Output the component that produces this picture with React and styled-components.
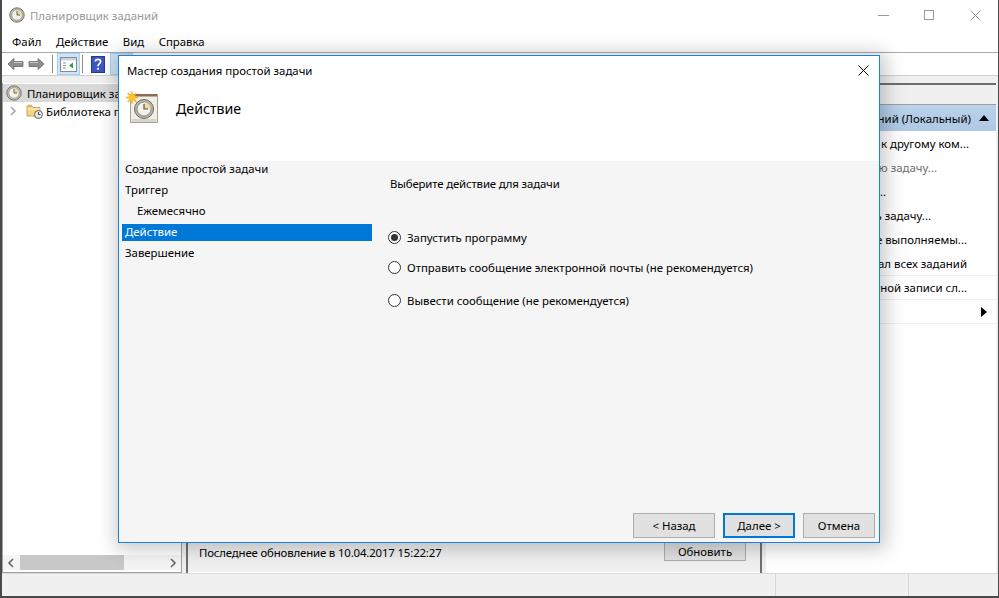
import React from "react";
import styled, { createGlobalStyle } from "styled-components";

const GlobalStyle = createGlobalStyle`
  html, body {
    margin: 0;
    padding: 0;
    overflow: hidden;
    background: #fff;
  }
  * {
    box-sizing: border-box;
  }
  svg {
    flex: none;
  }
`;

const Page = styled.div`
  position: relative;
  width: 999px;
  height: 598px;
  display: flex;
  flex-direction: column;
  overflow: hidden;
  background: #fff;
  border: 1px solid #4a4a4a;
  border-width: 0 1px 2px 2px;
  font-family: "Noto Sans", "Open Sans", sans-serif;
  font-size: 11.4px;
  color: #000;
`;

const TitleBar = styled.div`
  height: 30px;
  flex: none;
  display: flex;
  align-items: center;
  padding-left: 7px;
  gap: 5px;
  color: #999;
`;

const WindowButtons = styled.div`
  margin-left: auto;
  display: flex;
`;

const WindowButton = styled.div`
  width: 46px;
  height: 30px;
  display: flex;
  align-items: center;
  justify-content: center;
  color: #999;
`;

const MenuBar = styled.div`
  height: 23px;
  flex: none;
  display: flex;
  align-items: center;
  padding-left: 10px;
  gap: 14.5px;
  border-bottom: 1px solid #a9a9b4;
`;

const Toolbar = styled.div`
  height: 23px;
  flex: none;
  display: flex;
  align-items: center;
  padding-left: 3px;
  border-bottom: 1px solid #d0d0d0;
`;

const ToolIcon = styled.div`
  width: ${(p) => p.$w || 23}px;
  height: 22px;
  display: flex;
  align-items: center;
  justify-content: center;
  background: ${(p) => (p.$active ? "#cce4f7" : "transparent")};
  border: 1px solid ${(p) => (p.$active ? "#a6d2f2" : "transparent")};
`;

const ToolSep = styled.div`
  width: 1px;
  height: 18px;
  margin: 0 ${(p) => p.$space || 4}px;
  background: #8c8c8c;
`;

const Panes = styled.div`
  flex: 1;
  min-height: 0;
  display: grid;
  grid-template-columns: 180px 1fr 230px;
  gap: 4px;
  padding: 7px 2px 0 0;
  background: #f0f0f0;
`;

const TreePane = styled.div`
  display: flex;
  flex-direction: column;
  background: #fff;
  border: 1px solid #a0a0a0;
  border-width: 0 1px 1px 1px;
  padding-top: 1px;
`;

const TreeRow = styled.div`
  height: 18px;
  flex: none;
  display: flex;
  align-items: center;
  gap: ${(p) => (p.$nested ? 3 : 5)}px;
  padding-left: ${(p) => (p.$nested ? 6 : 3)}px;
  background: ${(p) => (p.$selected ? "#d9d9d9" : "transparent")};
  white-space: nowrap;
  overflow: hidden;
`;

const TreeToggle = styled.span`
  display: flex;
  margin-right: 6px;
`;

const ScrollBar = styled.div`
  margin-top: auto;
  height: 15px;
  margin-bottom: 2px;
  display: flex;
  align-items: center;
  justify-content: space-between;
  padding: 0 4px;
  background: #f4f4f4;
`;

const ScrollThumb = styled.div`
  width: 104px;
  height: 15px;
  margin: 0 auto 0 5px;
  background: #c8c8c8;
`;

const CenterPane = styled.div`
  display: flex;
  flex-direction: column;
  background: #fff;
  border-left: 2px solid #707070;
  border-right: 2px solid #707070;
`;

const UpdateBar = styled.div`
  margin-top: auto;
  height: 31px;
  display: flex;
  align-items: flex-start;
  justify-content: space-between;
  padding: 2px 14px 0 11px;
  background: #f0f0f0;
  margin-bottom: 1px;
`;

const UpdateText = styled.span`
  padding-top: 2px;
  letter-spacing: -0.15px;
`;

const PlainButton = styled.div`
  width: 82px;
  height: 20px;
  display: flex;
  align-items: center;
  justify-content: center;
  background: #e1e1e1;
  border: 1px solid #adadad;
  margin-top: -2px;
`;

const ActionsPane = styled.div`
  display: flex;
  flex-direction: column;
  background: #fff;
  border-top: 2px solid #6e6e6e;
`;

const ActionsTitle = styled.div`
  height: 20px;
  flex: none;
  background: #f0f0f0;
  border-bottom: 1px solid #a0a0a0;
`;

const ActionsHeader = styled.div`
  height: 26px;
  flex: none;
  display: flex;
  align-items: center;
  justify-content: space-between;
  padding: 0 7px 0 19px;
  margin-bottom: 1px;
  background: linear-gradient(#bad2ea, #aec9e5);
  white-space: nowrap;
`;

const ActionRow = styled.div`
  height: 24px;
  flex: none;
  display: flex;
  align-items: center;
  justify-content: space-between;
  padding: 0 9px 0 19px;
  color: ${(p) => (p.$muted ? "#6d6d6d" : "#000")};
  border-bottom: 1px solid ${(p) => (p.$line ? "#f0f0f0" : "transparent")};
  white-space: nowrap;
`;

/* right edge of the label is what shows beside the dialog */
const ActionLabel = styled.span`
  width: ${(p) => p.$width}px;
  display: flex;
  justify-content: flex-end;
`;

const StatusBar = styled.div`
  height: 23px;
  flex: none;
  display: grid;
  grid-template-columns: 774px 133px 1fr;
  background: #f0f0f0;
  border-top: 1px solid #d8d8d8;
`;

const StatusCell = styled.div`
  border-right: 1px solid #d8d8d8;
  &:last-child {
    border-right: 0;
  }
`;

const Dialog = styled.div`
  position: absolute;
  left: 116px;
  top: 55px;
  width: 762px;
  height: 488px;
  display: flex;
  flex-direction: column;
  background: #f5f5f5;
  border: 1px solid #1883d7;
  box-shadow: 2px 2px 18px 4px rgba(0, 0, 0, 0.22);
`;

const DialogHead = styled.div`
  height: 105px;
  flex: none;
  display: flex;
  flex-direction: column;
  background: #fff;
`;

const DialogTitle = styled.div`
  height: 28px;
  flex: none;
  display: flex;
  align-items: center;
  justify-content: space-between;
  padding: 0 10px 0 8px;
`;

const DialogBanner = styled.div`
  display: flex;
  align-items: center;
  gap: 17px;
  padding-left: 6px;
  margin-top: 7px;
  font-size: 14.2px;
`;

const DialogBody = styled.div`
  flex: 1;
  min-height: 0;
  display: grid;
  grid-template-columns: 253px 1fr;
`;

const Steps = styled.div`
  display: flex;
  flex-direction: column;
  padding-left: 3px;
  margin-top: -2px;
`;

const Step = styled.div`
  height: 21px;
  display: flex;
  align-items: center;
  padding: 0 0 2px ${(p) => (p.$indent ? 15 : 3)}px;
  color: ${(p) => (p.$current ? "#fff" : "#000")};
  position: relative;
  z-index: 0;

  /* selection band is shorter than the row */
  &::before {
    content: "";
    position: absolute;
    z-index: -1;
    left: 0;
    right: 0;
    top: 2px;
    bottom: 2px;
    background: ${(p) => (p.$current ? "#0078d7" : "transparent")};
  }
`;

const Choices = styled.div`
  display: flex;
  flex-direction: column;
  padding-left: 16px;
`;

const Prompt = styled.div`
  height: 18px;
  display: flex;
  align-items: center;
  padding-left: 2px;
  margin: 13px 0 36px;
  letter-spacing: -0.15px;
`;

const Choice = styled.label`
  height: 18px;
  display: flex;
  align-items: center;
  gap: 6px;
  margin-bottom: ${(p) => p.$gap}px;
`;

const RadioDot = styled.span`
  width: 13px;
  height: 13px;
  flex: none;
  display: flex;
  align-items: center;
  justify-content: center;
  border-radius: 50%;
  background: #fff;
  border: 1px solid #333;

  &::after {
    content: "";
    width: 7px;
    height: 7px;
    border-radius: 50%;
    background: ${(p) => (p.$on ? "#333" : "transparent")};
  }
`;

const DialogFooter = styled.div`
  height: 25px;
  margin-bottom: 4px;
  flex: none;
  display: flex;
  justify-content: flex-end;
  gap: 8px;
  padding-right: 4px;
`;

const DialogButton = styled.div`
  width: ${(p) => p.$w}px;
  height: 25px;
  display: flex;
  align-items: center;
  justify-content: center;
  background: #e1e1e1;
  border: ${(p) => (p.$primary ? "2px solid #0078d7" : "1px solid #adadad")};
`;

function ClockIcon({ size = 16 }) {
  return (
    <svg width={size} height={size} viewBox="0 0 16 16">
      <circle cx="8" cy="8" r="7.2" fill="#b9b9b2" stroke="#77756e" strokeWidth="1" />
      <circle cx="8" cy="8" r="5.2" fill="#f4f1e6" stroke="#8d8d88" strokeWidth="0.6" />
      <path d="M8 3 A5 5 0 0 1 13 8 L8 8 Z" fill="#ecd9a5" />
      <path d="M8 4v4h3" fill="none" stroke="#5c5c5c" strokeWidth="1" />
    </svg>
  );
}

function FolderIcon() {
  return (
    <svg width="17" height="16" viewBox="0 0 17 16">
      <path d="M1 3h5l1 1.5h7V13H1z" fill="#f2d680" stroke="#b8954a" strokeWidth="0.8" />
      <path d="M1.5 6h12" stroke="#fff1c0" />
      <path d="M3 1.5v1.6M5 1.5v1.6" stroke="#b8954a" />
      <circle cx="12.5" cy="11.5" r="4" fill="#e9e9e4" stroke="#5f5f5f" />
      <path d="M12.5 9v2.6h2" fill="none" stroke="#444" />
    </svg>
  );
}

function TaskIcon() {
  return (
    <svg width="34" height="34" viewBox="0 0 34 34">
      <rect x="5.5" y="3.5" width="27" height="28" fill="#f3efe4" stroke="#a8a294" />
      <rect x="6" y="3" width="26" height="2.5" fill="#8c6a55" />
      <rect x="7" y="28" width="24" height="3" fill="#d8d4ca" />
      <circle cx="19" cy="18" r="9.5" fill="#b4b4ae" stroke="#6f6f68" />
      <circle cx="19" cy="18" r="7" fill="#f4f1e6" stroke="#8d8d88" />
      <path d="M19 11 A7 7 0 0 1 26 18 L19 18 Z" fill="#ecd9a5" />
      <path d="M19 13v5h4" fill="none" stroke="#555" strokeWidth="1.2" />
      <g stroke="#f5a81c" strokeWidth="1.4">
        <path d="M7 0.5v12M1 6.5h12M2.7 2.2l8.6 8.6M11.3 2.2l-8.6 8.6" />
      </g>
      <circle cx="7" cy="6.5" r="3.6" fill="#fbc22d" />
    </svg>
  );
}

function NavArrow({ flip }) {
  return (
    <svg width="17" height="14" viewBox="0 0 17 14" style={flip ? { transform: "scaleX(-1)" } : undefined}>
      <path d="M1 7 7 1.5V4.5H16V9.5H7V12.5Z" fill="#8f8f8f" stroke="#6a6a6a" strokeWidth="0.8" />
      <path d="M7 5.5H15" stroke="#c8c8c8" />
    </svg>
  );
}

function PanelIcon() {
  return (
    <svg width="17" height="15" viewBox="0 0 17 15">
      <rect x="0.5" y="0.5" width="16" height="14" fill="#fff" stroke="#8a8a8a" />
      <rect x="1" y="1" width="15" height="2.5" fill="#c9d3dc" />
      <path d="M3 6h3M3 8.5h3M3 11h3" stroke="#7f97ab" />
      <path d="M13 5.5v6l-4-3z" fill="#2f9e44" />
    </svg>
  );
}

function HelpIcon() {
  return (
    <svg width="14" height="17" viewBox="0 0 14 17">
      <rect x="0.5" y="0.5" width="13" height="16" fill="#3a56c5" stroke="#26398c" />
      <path d="M4.4 5.6C4.4 2.6 9.6 2.6 9.6 5.6C9.6 7.8 7 7.6 7 10.3M7 11.8v2" fill="none" stroke="#fff" strokeWidth="1.8" />
    </svg>
  );
}

function CrossIcon({ size = 11, color = "#000" }) {
  return (
    <svg width={size} height={size} viewBox="0 0 11 11">
      <path d="M0.5 0.5 10.5 10.5M10.5 0.5 0.5 10.5" stroke={color} strokeWidth="1" />
    </svg>
  );
}

function Chevron({ flip, color = "#666" }) {
  return (
    <svg width="8" height="10" viewBox="0 0 8 10" style={flip ? { transform: "scaleX(-1)" } : undefined}>
      <path d="M2 1 6 5 2 9" fill="none" stroke={color} strokeWidth="1.6" />
    </svg>
  );
}

const actions = [
  { label: "Подключиться к другому ком...", width: 184 },
  { label: "Создать простую задачу...", width: 152, muted: true },
  { label: "Создать задачу...", width: 101 },
  { label: "Импортировать задачу...", width: 146 },
  { label: "Отображать все выполняемы...", width: 182 },
  { label: "Включить журнал всех заданий", width: 182, line: true },
  { label: "Настройка учетной записи сл...", width: 182, line: true },
  {
    label: "Вид",
    width: 20,
    line: true,
    extra: (
      <svg width="6" height="10" viewBox="0 0 6 10">
        <path d="M0 0 6 5 0 10Z" fill="#000" />
      </svg>
    ),
  },
];

export default function App() {
  return (
    <>
      <GlobalStyle />
      <Page>
        <TitleBar>
          <ClockIcon />
          <span>Планировщик заданий</span>
          <WindowButtons>
            <WindowButton>
              <svg width="11" height="1" viewBox="0 0 11 1">
                <path d="M0 .5h11" stroke="#999" />
              </svg>
            </WindowButton>
            <WindowButton>
              <svg width="10" height="10" viewBox="0 0 10 10">
                <rect x=".5" y=".5" width="9" height="9" fill="none" stroke="#999" />
              </svg>
            </WindowButton>
            <WindowButton>
              <CrossIcon color="#999" />
            </WindowButton>
          </WindowButtons>
        </TitleBar>
        <MenuBar>
          <span>Файл</span>
          <span>Действие</span>
          <span>Вид</span>
          <span>Справка</span>
        </MenuBar>
        <Toolbar>
          <ToolIcon $w={20}>
            <NavArrow />
          </ToolIcon>
          <ToolIcon $w={23}>
            <NavArrow flip />
          </ToolIcon>
          <ToolSep $space={4} />
          <ToolIcon $active>
            <PanelIcon />
          </ToolIcon>
          <ToolSep $space={2} />
          <ToolIcon $w={25}>
            <HelpIcon />
          </ToolIcon>
          <ToolIcon $active />
        </Toolbar>
        <Panes>
          <TreePane>
            <TreeRow $selected>
              <ClockIcon />
              <span>Планировщик заданий (Локальный)</span>
            </TreeRow>
            <TreeRow $nested>
              <TreeToggle>
                <Chevron color="#a6a6a6" />
              </TreeToggle>
              <FolderIcon />
              <span>Библиотека планировщика заданий</span>
            </TreeRow>
            <ScrollBar>
              <Chevron flip />
              <ScrollThumb />
              <Chevron />
            </ScrollBar>
          </TreePane>
          <CenterPane>
            <UpdateBar>
              <UpdateText>Последнее обновление в 10.04.2017 15:22:27</UpdateText>
              <PlainButton>Обновить</PlainButton>
            </UpdateBar>
          </CenterPane>
          <ActionsPane>
            <ActionsTitle />
            <ActionsHeader>
              <ActionLabel $width={186}>Планировщик заданий (Локальный)</ActionLabel>
              <svg width="10" height="6" viewBox="0 0 10 6">
                <path d="M0 6 5 0 10 6Z" fill="#000" />
              </svg>
            </ActionsHeader>
            {actions.map((a) => (
              <ActionRow key={a.label} $muted={a.muted} $line={a.line}>
                <ActionLabel $width={a.width}>{a.label}</ActionLabel>
                {a.extra}
              </ActionRow>
            ))}
          </ActionsPane>
        </Panes>
        <StatusBar>
          <StatusCell />
          <StatusCell />
          <StatusCell />
        </StatusBar>
        <Dialog>
          <DialogHead>
            <DialogTitle>
              <span>Мастер создания простой задачи</span>
              <CrossIcon />
            </DialogTitle>
            <DialogBanner>
              <TaskIcon />
              <span>Действие</span>
            </DialogBanner>
          </DialogHead>
          <DialogBody>
            <Steps>
              <Step>Создание простой задачи</Step>
              <Step>Триггер</Step>
              <Step $indent>Ежемесячно</Step>
              <Step $current>Действие</Step>
              <Step>Завершение</Step>
            </Steps>
            <Choices>
              <Prompt>Выберите действие для задачи</Prompt>
              <Choice $gap={12}>
                <RadioDot $on />
                Запустить программу
              </Choice>
              <Choice $gap={15}>
                <RadioDot />
                Отправить сообщение электронной почты (не рекомендуется)
              </Choice>
              <Choice $gap={0}>
                <RadioDot />
                Вывести сообщение (не рекомендуется)
              </Choice>
            </Choices>
          </DialogBody>
          <DialogFooter>
            <DialogButton $w={82}>&lt; Назад</DialogButton>
            <DialogButton $w={72} $primary>
              Далее &gt;
            </DialogButton>
            <DialogButton $w={72}>Отмена</DialogButton>
          </DialogFooter>
        </Dialog>
      </Page>
    </>
  );
}
